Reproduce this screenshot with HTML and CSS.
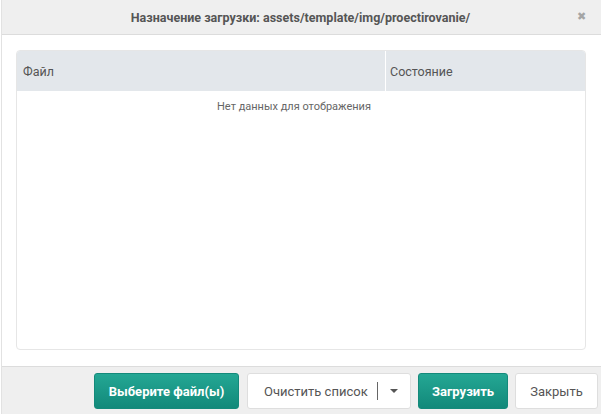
FILE: index.html
```html
<!DOCTYPE html>
<html lang="ru">
<head>
  <meta charset="UTF-8">
  <title>Назначение загрузки</title>
  <link rel="stylesheet" href="styles.css">
</head>
<body>
  <div class="dialog">
    <div class="titlebar">
      <span class="title">Назначение загрузки: assets/template/img/proectirovanie/</span>
      <span class="close">&#x2716;</span>
    </div>
    <div class="content">
      <div class="grid">
        <div class="grid-head">
          <div class="col col-file">Файл</div>
          <div class="col col-state">Состояние</div>
        </div>
        <div class="empty">Нет данных для отображения</div>
      </div>
    </div>
    <div class="footer">
      <button class="btn btn-primary btn-pick">Выберите файл(ы)</button>
      <button class="btn btn-split">
        <span>Очистить список</span>
        <span class="sep"></span>
        <span class="caret"></span>
      </button>
      <button class="btn btn-primary btn-upload">Загрузить</button>
      <button class="btn btn-close">Закрыть</button>
    </div>
  </div>
</body>
</html>
```

FILE: styles.css
```css
html, body { margin: 0; padding: 0; background: #fff; }
body { font-family: Roboto, "Liberation Sans", Arial, sans-serif; color: #555; }
.dialog { height: 414px; display: flex; flex-direction: column; margin-left: 1px; border-left: 1px solid #e2e2e2; }
.titlebar { height: 34px; flex: none; background: #efefef; border-bottom: 1px solid #dcdcdc; display: flex; align-items: center; justify-content: center; position: relative; }
.title { font-size: 12.5px; font-weight: bold; color: #555; margin-left: -2px; }
.close { position: absolute; right: 15px; top: 10px; font-size: 11px; color: #a5a5a5; }
.content { flex: 1; padding: 15px 15px 16px 14px; display: flex; }
.grid { flex: 1; border: 1px solid #e6e6e6; border-radius: 4px; overflow: hidden; }
.grid-head { display: flex; height: 40px; background: #e3e7eb; }
.col { display: flex; align-items: center; font-size: 12.5px; color: #555; }
.col-file { width: 362px; padding-left: 6px; border-right: 1px solid #fff; }
.col-state { flex: 1; padding-left: 4px; }
.empty { text-align: center; font-size: 11px; color: #666; padding-top: 9px; padding-right: 14px; }
.footer { height: 48px; flex: none; background: #efefef; border-top: 1px solid #dcdcdc; display: flex; justify-content: flex-end; align-items: flex-start; padding: 6px 3px 0 0; gap: 7px; box-sizing: border-box; }
.btn { height: 36px; font-family: inherit; font-size: 13px; border-radius: 3px; cursor: pointer; padding: 0; }
.btn-primary { background: linear-gradient(#24a794, #12897a); border: 1px solid #148a7b; color: #fff; font-weight: bold; }
.btn-pick { width: 145px; margin-right: 1px; }
.btn-upload { width: 90px; }
.btn-split { width: 164px; background: #fff; border: 1px solid #dedede; color: #555; display: flex; align-items: center; padding-left: 16px; }
.sep { width: 1px; height: 18px; background: #666; margin-left: 9px; }
.caret { width: 0; height: 0; border-left: 4px solid transparent; border-right: 4px solid transparent; border-top: 4px solid #555; margin-left: 12px; }
.btn-close { width: 83px; background: #fff; border: 1px solid #dedede; color: #555; }
```
